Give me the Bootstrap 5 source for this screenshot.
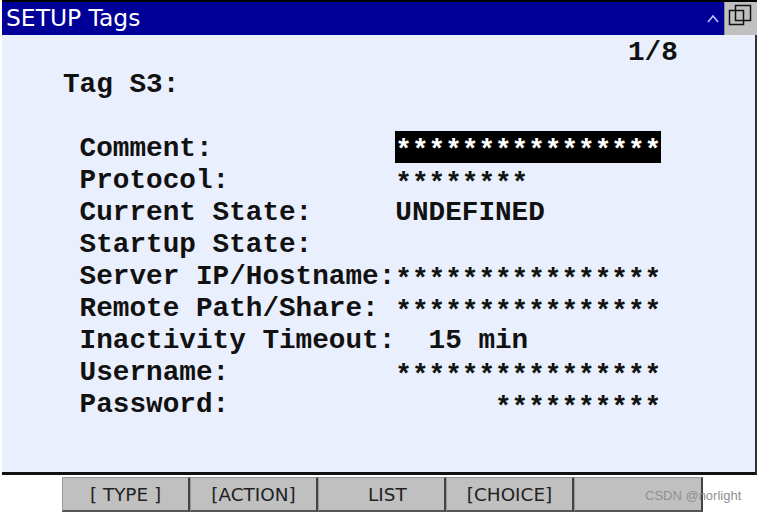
<!DOCTYPE html>
<html lang="en">
<head>
  <meta charset="UTF-8">
  <title>SETUP Tags</title>
  <link href="https://cdn.jsdelivr.net/npm/bootstrap@5.3.3/dist/css/bootstrap.min.css" rel="stylesheet">
  <style>
    body { background: #fff; overflow: hidden; }
    .pendant { width: 757px; height: 513px; }
    .top-bar { height: 35px; margin-left: 2px; background: #000099; border-top: 2px solid #000; color: #fff; }
    .top-title { padding-left: 4px; font: 23.4px/31px "DejaVu Sans", sans-serif; }
    .top-caret { width: 14px; height: 14px; margin-right: 4px; }
    .top-max { width: 33px; height: 33px; background: #c0c0c0; border-left: 1px solid #888; }
    .screen { height: 440px; margin-left: 2px; background: #e9effd; border-right: 2px solid #333; border-bottom: 3px solid #111; padding: 1px 0 0 61px; color: #111; font: bold 27.7px/34px "Liberation Mono", monospace; }
    .term-line { height: 32px; white-space: pre; }
    .term-hi { display: inline-block; height: 32px; margin-top: -1px; vertical-align: top; background: #000; color: #fff; }
    .term-star { vertical-align: -3px; }
    .fkeys { height: 36px; padding-left: 62px; margin-top: 2px; }
    .fkey { width: 128px; height: 35px; background: #c0c0c0; border: 1px solid #999; border-right: 2px solid #444; border-bottom: 2px solid #555; font: 18.4px/34px "DejaVu Sans", sans-serif; color: #222; text-align: center; white-space: pre; }
    .fkey:last-child { width: 129px; }
    .wm { position: absolute; left: 645px; top: 487px; font: 13px/18px "Liberation Sans", sans-serif; color: #8f8f8f; }
  </style>
</head>
<body>
  <div class="pendant position-relative">
    <div class="top-bar d-flex align-items-center">
      <div class="top-title flex-grow-1">SETUP Tags</div>
      <svg class="top-caret" viewBox="0 0 14 14"><path d="M2 10 L7 4 L12 10" fill="none" stroke="#b9c6f5" stroke-width="1.6"/></svg>
      <div class="top-max">
        <svg width="33" height="33" viewBox="0 0 33 33"><path d="M10.500 3.500H25.500V18.500H10.500ZM4.500 8.500H18.500V22.500H4.500Z" fill="none" stroke="#111" stroke-width="1.500"/></svg>
      </div>
    </div>
    <div class="screen">
      <div class="term-line">                                  1/8</div>
      <div class="term-line">Tag S3:</div>
      <div class="term-line"></div>
      <div class="term-line"> Comment:           <span class="term-hi"><span class="term-star">****************</span></span></div>
      <div class="term-line"> Protocol:          <span class="term-star">********</span></div>
      <div class="term-line"> Current State:     UNDEFINED</div>
      <div class="term-line"> Startup State:</div>
      <div class="term-line"> Server IP/Hostname:<span class="term-star">****************</span></div>
      <div class="term-line"> Remote Path/Share: <span class="term-star">****************</span></div>
      <div class="term-line"> Inactivity Timeout:  15 min</div>
      <div class="term-line"> Username:          <span class="term-star">****************</span></div>
      <div class="term-line"> Password:                <span class="term-star">**********</span></div>
    </div>
    <div class="fkeys d-flex">
      <div class="fkey">[ TYPE ]</div>
      <div class="fkey">[ACTION]</div>
      <div class="fkey">  LIST</div>
      <div class="fkey">[CHOICE]</div>
      <div class="fkey"></div>
    </div>
    <div class="wm">CSDN @norlight</div>
  </div>
  <script src="https://cdn.jsdelivr.net/npm/bootstrap@5.3.3/dist/js/bootstrap.bundle.min.js"></script>
</body>
</html>
